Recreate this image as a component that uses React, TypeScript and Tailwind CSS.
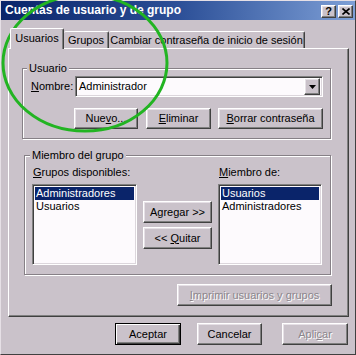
import type { ReactNode } from 'react'

const raised =
  'border border-t-white border-l-white border-r-[#404040] border-b-[#404040] shadow-[inset_-1px_-1px_0_#808080,inset_1px_1px_0_#e6e0e6]'
const primaryFrame =
  'border border-black shadow-[inset_1px_1px_0_#fff,inset_-1px_-1px_0_#404040,inset_-2px_-2px_0_#808080]'
const sunken =
  'border border-t-[#808080] border-l-[#808080] border-r-white border-b-white shadow-[inset_1px_1px_0_#404040,inset_-1px_-1px_0_#dcd6dc]'
const etched = 'border border-[#868086] shadow-[inset_1px_1px_0_#fff,1px_1px_0_#fff]'
const dimText = 'text-[#8c868c] [text-shadow:1px_1px_0_#fff]'

function Btn({
  children,
  className = '',
  disabled = false,
  primary = false,
}: {
  children: ReactNode
  className?: string
  disabled?: boolean
  primary?: boolean
}) {
  return (
    <button
      type="button"
      className={`flex items-center justify-center leading-none ${primary ? primaryFrame : raised} ${disabled ? dimText : 'text-black'} ${className}`}
    >
      <span>{children}</span>
    </button>
  )
}

function ListBox({ items, className }: { items: string[]; className: string }) {
  return (
    <div className={`bg-[#fdfafd] p-[2px] ${sunken} ${className}`}>
      {items.map((item, i) => (
        <div
          key={item}
          className={`h-[13px] pl-[1px] leading-[13px] ${i === 0 ? 'bg-[#0a246a] text-white' : 'text-black'}`}
        >
          {item}
        </div>
      ))}
    </div>
  )
}

export default function App() {
  return (
    <div className="relative h-[355px] w-[356px] overflow-hidden bg-[#cac2ca] font-['Liberation_Sans',Arial,sans-serif] text-[11px] text-black">
      <div className="flex h-full flex-col border border-t-[#e6e0e6] border-l-[#e6e0e6] border-r-[#404040] border-b-[#404040]">
        {/* title bar */}
        <div className="flex h-[19px] items-start bg-linear-to-r from-[#0a246a] via-[#2c4f97] to-[#7e9fd6] pl-[4px] pr-[2px]">
          <span className="mt-[3px] text-[12px] leading-[13px] font-bold text-white">
            Cuentas de usuario y de grupo
          </span>
          <div className="ml-auto mt-[4px] flex gap-[2px]">
            <div className={`flex h-[13px] w-[15px] items-center justify-center bg-[#cac2ca] text-[11px] leading-none font-bold ${raised}`}>
              ?
            </div>
            <div className={`flex h-[13px] w-[15px] items-center justify-center bg-[#cac2ca] ${raised}`}>
              <svg width="8" height="7" viewBox="0 0 8 7">
                <path d="M0.5 0.5 L7.5 6.5 M7.5 0.5 L0.5 6.5" stroke="black" strokeWidth="1.6" />
              </svg>
            </div>
          </div>
        </div>

        {/* tabs */}
        <div className="ml-[9px] mt-[8px] flex h-[20px] items-end">
          <div className="relative z-10 -mb-px flex h-[21px] w-[54px] items-center justify-center rounded-t-[2px] border-t border-r border-l border-t-white border-r-[#404040] border-l-white bg-[#cac2ca] pb-[2px] shadow-[inset_-1px_0_0_#808080]">
            Usuarios
          </div>
          <div className="flex h-[17px] w-[45px] items-center justify-center rounded-t-[2px] border-t border-r border-t-white border-r-[#404040] shadow-[inset_-1px_0_0_#808080]">
            Grupos
          </div>
          <div className="flex h-[17px] w-[196px] items-center justify-center rounded-t-[2px] border-t border-r border-t-white border-r-[#404040] shadow-[inset_-1px_0_0_#808080]">
            Cambiar contraseña de inicio de sesión
          </div>
        </div>

        {/* tab panel */}
        <div className="ml-[7px] flex h-[269px] w-[341px] flex-col border border-t-white border-l-white border-r-[#404040] border-b-[#404040] shadow-[inset_-1px_-1px_0_#808080]">
          <fieldset className={`ml-[13px] mt-[13px] w-[309px] ${etched}`}>
            <legend className="ml-[4px] bg-[#cac2ca] px-[2px] leading-[13px]">Usuario</legend>
            <div className="flex items-center pl-[8px] pt-[1px]">
              <span className="w-[44px]">
                <u>N</u>ombre:
              </span>
              <div className={`flex h-[21px] w-[248px] items-center bg-[#fdfafd] p-[2px] ${sunken}`}>
                <span className="flex-1 pl-[1px]">Administrador</span>
                <div className={`flex h-[17px] w-[16px] items-center justify-center bg-[#cac2ca] ${raised}`}>
                  <svg width="7" height="4" viewBox="0 0 7 4">
                    <path d="M0 0 H7 L3.5 4 Z" fill="black" />
                  </svg>
                </div>
              </div>
            </div>
            <div className="mt-[11px] flex pb-[9px] pl-[51px]">
              <Btn className="h-[21px] w-[64px]">
                Nue<u>v</u>o...
              </Btn>
              <Btn className="ml-[8px] h-[21px] w-[65px]">
                <u>E</u>liminar
              </Btn>
              <Btn className="ml-[7px] h-[21px] w-[105px]">
                <u>B</u>orrar contraseña
              </Btn>
            </div>
          </fieldset>

          <fieldset className={`ml-[15px] mt-[10px] w-[307px] ${etched}`}>
            <legend className="ml-[5px] bg-[#cac2ca] px-[2px] leading-[13px]">Miembro del grupo</legend>
            <div className="flex pb-[9px] pl-[7px]">
              <div className="flex flex-col">
                <span className="mt-[4px] pl-[1px] leading-[13px]">
                  <u>G</u>rupos disponibles:
                </span>
                <ListBox items={['Administradores', 'Usuarios']} className="mt-[5px] h-[81px] w-[105px]" />
              </div>
              <div className="ml-[6px] mt-[39px] flex flex-col gap-[4px]">
                <Btn className="h-[22px] w-[69px]">
                  A<u>g</u>regar &gt;&gt;
                </Btn>
                <Btn className="h-[22px] w-[69px]">
                  &lt;&lt; <u>Q</u>uitar
                </Btn>
              </div>
              <div className="ml-[6px] flex flex-col">
                <span className="mt-[4px] pl-[1px] leading-[13px]">
                  <u>M</u>iembro de:
                </span>
                <ListBox items={['Usuarios', 'Administradores']} className="mt-[5px] h-[81px] w-[104px]" />
              </div>
            </div>
          </fieldset>

          <Btn disabled className="ml-[168px] mt-[9px] h-[22px] w-[155px]">
            <u>I</u>mprimir usuarios y grupos
          </Btn>
        </div>

        {/* dialog buttons */}
        <div className="ml-[114px] mt-[6px] flex">
          <Btn primary className="h-[22px] w-[66px]">
            Aceptar
          </Btn>
          <Btn className="ml-[16px] h-[22px] w-[65px]">Cancelar</Btn>
          <Btn disabled className="ml-[20px] h-[22px] w-[66px]">
            Apli<u>c</u>ar
          </Btn>
        </div>
      </div>

      {/* hand-drawn annotation over the screenshot */}
      <svg className="pointer-events-none absolute inset-0" width="356" height="355" viewBox="0 0 356 355">
        <rect x="14" y="47" width="45" height="2" fill="#e01818" />
        <ellipse cx="85" cy="63" rx="82" ry="68" fill="none" stroke="#22b422" strokeWidth="3" />
      </svg>
    </div>
  )
}
